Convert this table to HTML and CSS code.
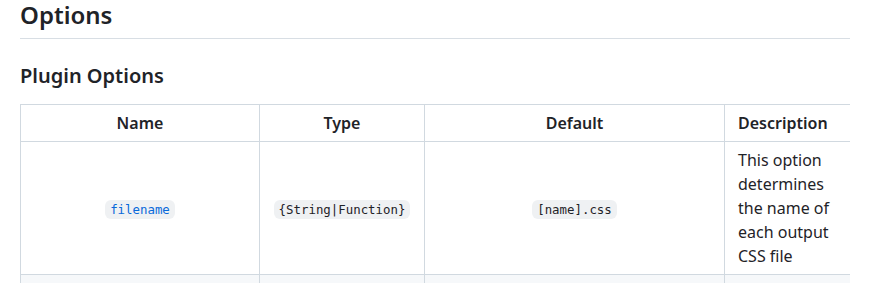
FILE: index.html
```html
<!DOCTYPE html>
<html>

<head>
    <title>mini-css-extract-plugin - Options</title>
    <meta name="viewport" content="width=device-width, initial-scale=1.0">
    <link rel="stylesheet" href="styles.css">
</head>

<body>
    <article class="markdown-body">
        <h2>Options</h2>

        <h3>Plugin Options</h3>

        <div class="table-wrap">
            <table>
                <thead>
                    <tr>
                        <th class="col-name">Name</th>
                        <th class="col-type">Type</th>
                        <th class="col-default">Default</th>
                        <th class="col-desc">Description</th>
                    </tr>
                </thead>
                <tbody>
                    <tr>
                        <td class="center"><a href="#filename"><code>filename</code></a></td>
                        <td class="center"><code>{String|Function}</code></td>
                        <td class="center"><code>[name].css</code></td>
                        <td>This option determines the name of each output CSS file</td>
                    </tr>
                    <tr>
                        <td class="center"><a href="#chunkfilename"><code>chunkFilename</code></a></td>
                        <td class="center"><code>{String|Function}</code></td>
                        <td class="center"><code>based on filename</code></td>
                        <td>This option determines the name of non-entry chunk files</td>
                    </tr>
                </tbody>
            </table>
        </div>
    </article>
</body>

</html>
```

FILE: styles.css
```css
html,
body {
    margin: 0;
    background: #ffffff;
}

.markdown-body {
    width: 830px;
    padding-left: 20px;
    font-family: "Noto Sans", "Open Sans", sans-serif;
    font-size: 16px;
    line-height: 1.5;
    color: #1f2328;
}

.markdown-body h2 {
    margin: 0 0 16px;
    padding-bottom: 8px;
    font-size: 24px;
    font-weight: 600;
    line-height: 1.25;
    border-bottom: 1px solid #d8dee4;
}

.markdown-body h3 {
    margin: 24px 0 16px;
    font-size: 20px;
    font-weight: 600;
    line-height: 1.25;
}

.table-wrap {
    overflow: hidden;
}

table {
    width: max-content;
    border-collapse: collapse;
    border-spacing: 0;
}

th,
td {
    padding: 6px 13px;
    border: 1px solid #d1d9e0;
}

th {
    font-weight: 600;
    text-align: center;
}

.col-name { width: 212px; }
.col-type { width: 138px; }
.col-default { width: 273px; }

.col-desc {
    width: 102px;
    text-align: left;
}

td.center {
    text-align: center;
}

tbody tr:nth-child(2n) {
    background: #f6f8fa;
}

code {
    padding: 2px 5px;
    border-radius: 6px;
    background: #eff1f3;
    font-family: "DejaVu Sans Mono", "Liberation Mono", monospace;
    font-size: 12.4px;
}

a {
    color: #0969da;
    text-decoration: none;
}
```
